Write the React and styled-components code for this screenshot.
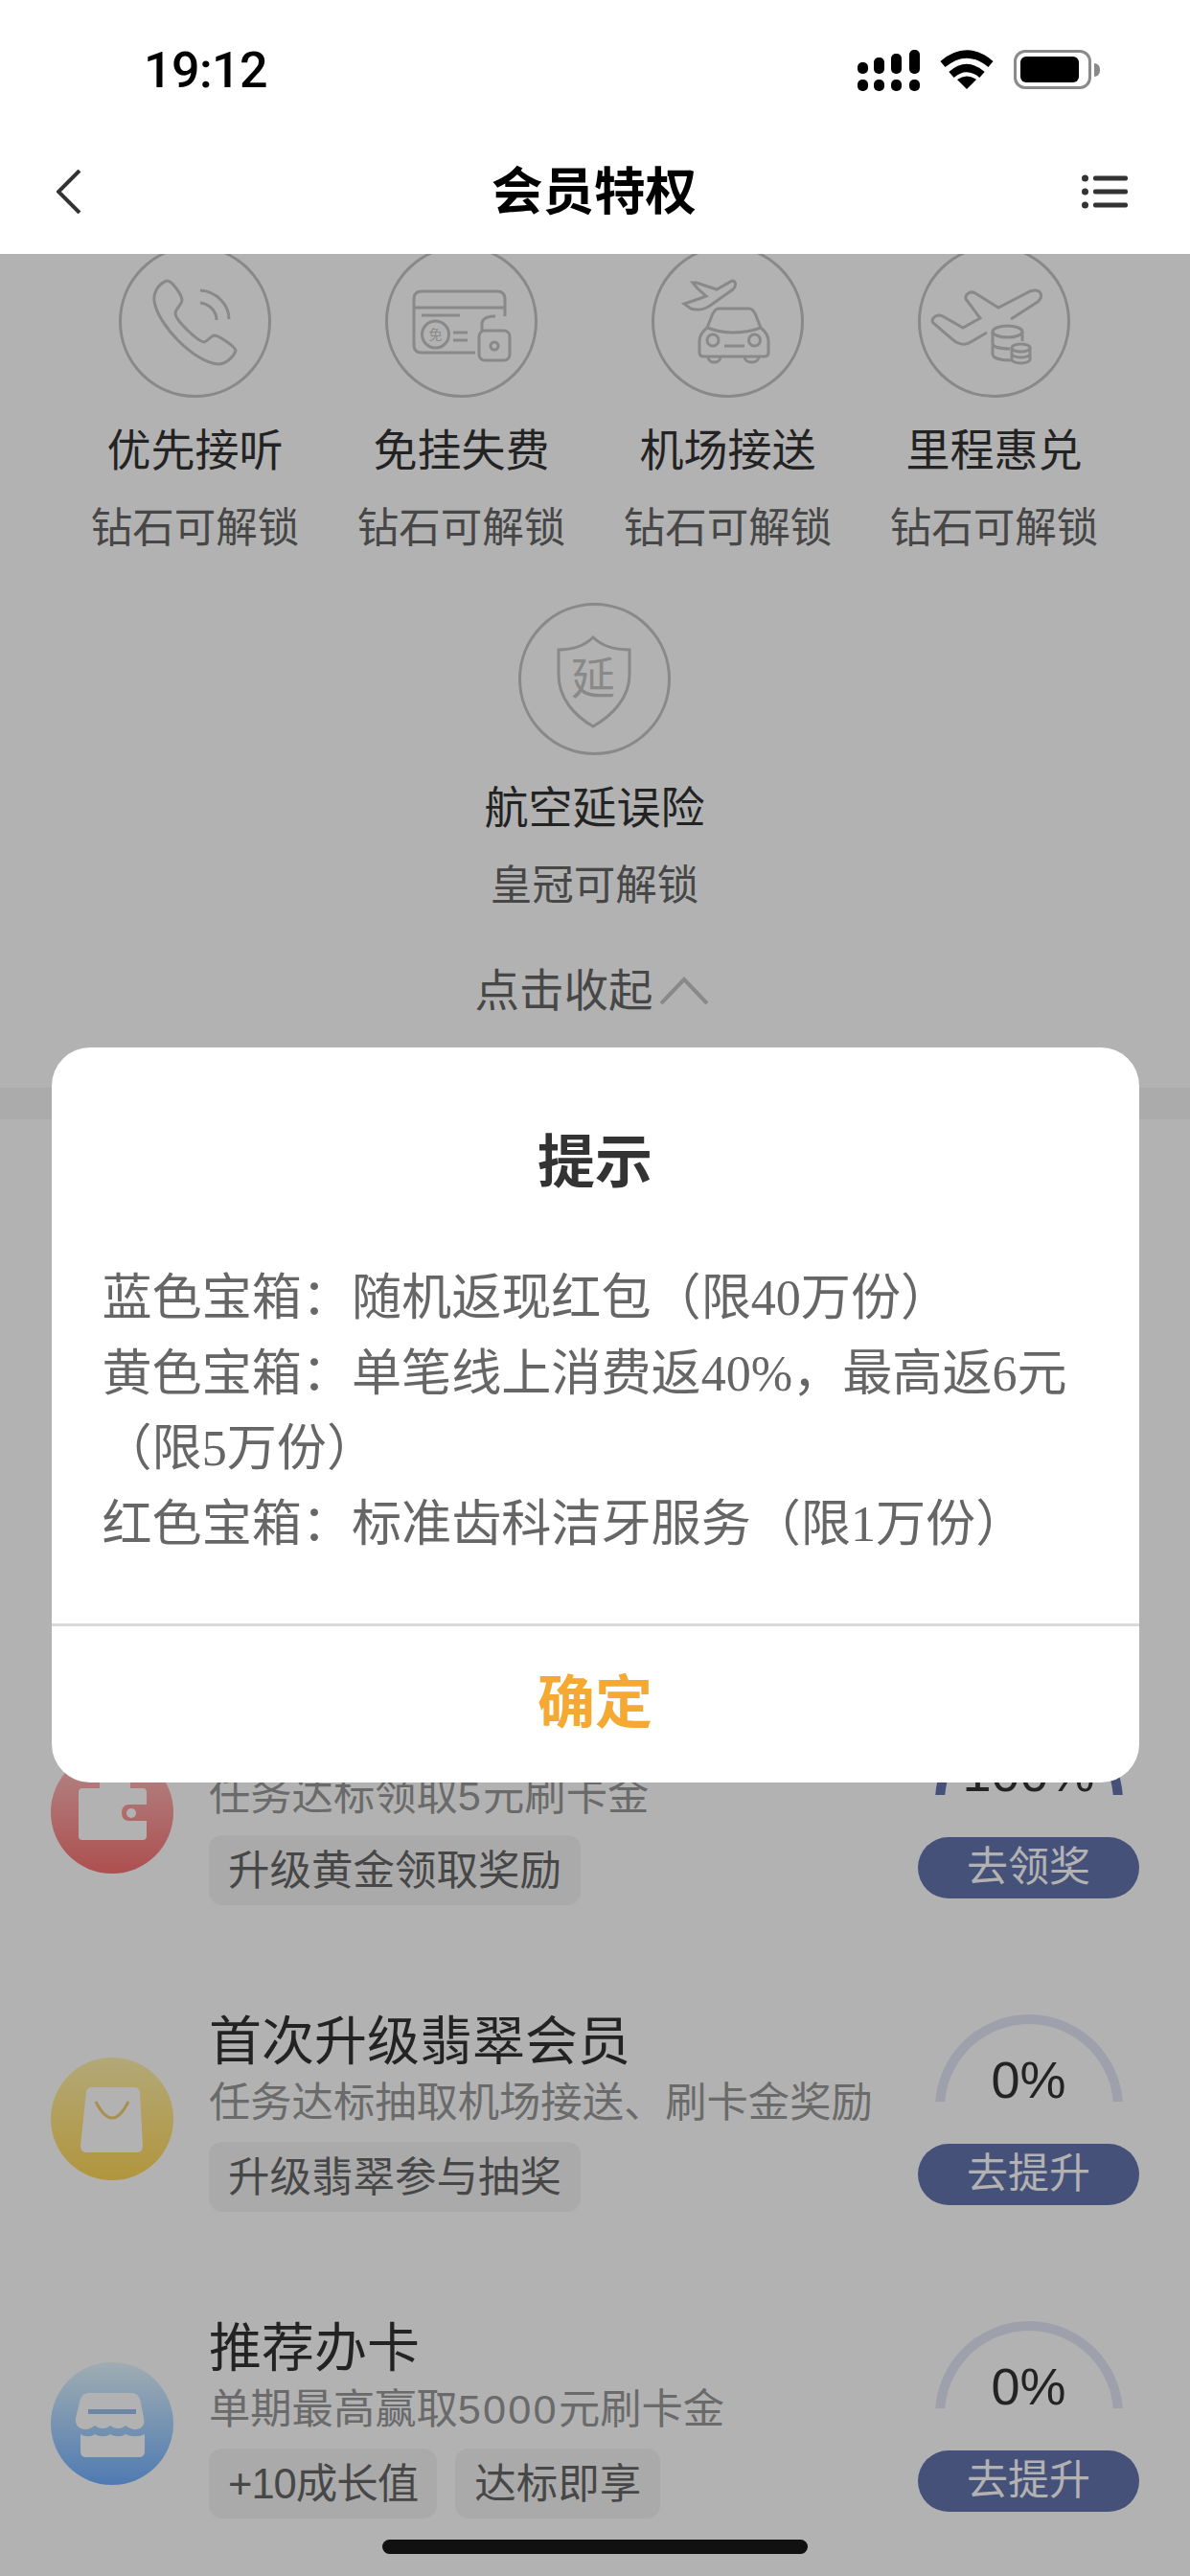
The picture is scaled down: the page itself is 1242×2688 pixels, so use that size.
import React from "react";
import styled, { createGlobalStyle } from "styled-components";

const GlobalStyle = createGlobalStyle`
  html, body { margin: 0; padding: 0; background: #fff; }
  * { box-sizing: border-box; }
  body { font-family: "Liberation Sans", "Noto Sans CJK SC", sans-serif; }
`;

const Screen = styled.div`
  position: relative;
  width: 1242px;
  height: 2688px;
  display: flex;
  flex-direction: column;
  overflow: hidden;
  background: #fff;
`;

const Top = styled.header`
  position: relative;
  z-index: 2;
  flex: none;
  background: #fff;
`;

const StatusBar = styled.div`
  height: 135px;
  display: flex;
  align-items: flex-start;
  justify-content: space-between;
  padding: 52px 103px 0 150px;
`;

const Clock = styled.div`
  font-family: Roboto, "Liberation Sans", sans-serif;
  font-size: 52px;
  line-height: 44px;
  font-weight: 500;
  letter-spacing: -0.6px;
  color: #000;
`;

const StatusIcons = styled.div`
  display: flex;
  gap: 21px;
`;

const Battery = styled.div`
  position: relative;
  width: 81px;
  height: 41px;
  padding: 4px;
  border: 3px solid #8a8a8a;
  border-radius: 12px;
  &::before {
    content: "";
    display: block;
    width: 61px;
    height: 27px;
    background: #000;
    border-radius: 6px;
  }
  &::after {
    content: "";
    position: absolute;
    right: -12px;
    top: 11px;
    width: 6px;
    height: 14px;
    background: #8a8a8a;
    border-radius: 0 6px 6px 0;
  }
`;

const Nav = styled.nav`
  height: 130px;
  display: grid;
  grid-template-columns: 1fr auto 1fr;
  align-items: center;
  padding: 0 61px 0 59px;
`;

const NavTitle = styled.h1`
  margin: 0;
  padding-top: 2px;
  font-size: 53.5px;
  line-height: 60px;
  font-weight: 700;
  color: #000;
`;

const NavEnd = styled.div`
  justify-self: ${(p) => (p.$end ? "end" : "start")};
  margin-right: ${(p) => (p.$end ? "4px" : "0")};
  display: flex;
`;

const Body = styled.main`
  position: relative;
  flex: 1;
  min-height: 0;
  overflow: hidden;
`;

const Scroll = styled.div`
  margin-top: -9px;
`;

const Perks = styled.section`
  padding: 0 65px 71px 64px;
  display: grid;
  grid-template-columns: repeat(4, 278px);
  justify-content: center;
  row-gap: 48px;
`;

const Perk = styled.div`
  display: flex;
  flex-direction: column;
  align-items: center;
  grid-column: ${(p) => (p.$wide ? "1 / -1" : "auto")};
`;

const PerkBadge = styled.svg`
  display: block;
  width: 159px;
  height: 159px;
  fill: none;
  stroke: #c4c4c4;
  stroke-width: 3;
`;

const PerkName = styled.div`
  margin-top: 25px;
  font-size: 46px;
  line-height: 60px;
  color: #333;
`;

const PerkHint = styled.div`
  margin-top: 21px;
  font-size: 43.5px;
  line-height: 60px;
  color: #666;
`;

const Collapse = styled.div`
  grid-column: 1 / -1;
  margin-top: 2px;
  display: flex;
  justify-content: center;
  align-items: center;
  gap: 7px;
  font-size: 46.5px;
  line-height: 60px;
  color: #666;
  svg { margin-right: 7px; }
`;

const Band = styled.div`
  height: 33px;
  background: #f5f5f5;
`;

const Tasks = styled.section`
  padding: 612px 53px 0;
  display: flex;
  flex-direction: column;
  gap: 112px;
`;

const Task = styled.article`
  height: 208px;
  display: flex;
  align-items: flex-start;
`;

const TaskIcon = styled.div`
  flex: none;
  width: 128px;
  height: 128px;
  margin: ${(p) => p.$top}px 37px 0 0;
  border-radius: 50%;
  background: linear-gradient(180deg, ${(p) => p.$from}, ${(p) => p.$to});
  svg { display: block; }
`;

const TaskText = styled.div`
  flex: 1;
  min-width: 0;
`;

const TaskTitle = styled.div`
  font-size: 55px;
  line-height: 60px;
  color: #333;
`;

const TaskDesc = styled.div`
  margin-top: 9px;
  font-size: 43.3px;
  line-height: 50px;
  white-space: nowrap;
  color: #999;
`;

const Digits = styled.span`
  letter-spacing: 2.2px;
`;

const Tags = styled.div`
  margin-top: 16px;
  display: flex;
  gap: 19px;
`;

const Tag = styled.span`
  height: 73px;
  padding: 0 20px 6px;
  display: flex;
  align-items: center;
  font-size: 43.5px;
  letter-spacing: ${(p) => (p.$tight ? "-1px" : "0")};
  color: #666;
  background: #f4f4f4;
  border-radius: 14px;
`;

const TaskSide = styled.div`
  flex: none;
  width: 231px;
  padding-top: 2px;
  display: flex;
  flex-direction: column;
  align-items: center;
`;

const Gauge = styled.div`
  display: grid;
  width: 196px;
  justify-items: center;
  > * { grid-area: 1 / 1; }
  svg { display: block; align-self: start; }
`;

const Percent = styled.div`
  margin-top: 38px;
  font-size: 54px;
  line-height: 60px;
  color: #333;
`;

const TaskBtn = styled.button`
  margin-top: 37px;
  width: 231px;
  height: 64px;
  padding: 0 0 2px;
  border: 0;
  border-radius: 32px;
  background: #6375ae;
  color: #fff;
  font: inherit;
  font-size: 43px;
  line-height: 62px;
`;

const Mask = styled.div`
  position: absolute;
  inset: 0;
  z-index: 1;
  display: flex;
  align-items: center;
  justify-content: center;
  background: rgba(0, 0, 0, 0.3);
`;

const Dialog = styled.div`
  width: 1135px;
  background: #fff;
  border-radius: 40px;
  overflow: hidden;
`;

const DialogTitle = styled.h2`
  margin: 0;
  padding-top: 86px;
  text-align: center;
  font-size: 60px;
  line-height: 70px;
  font-weight: 700;
  color: #333;
`;

const DialogText = styled.div`
  padding: 67px 53px 64px;
  font-family: "Liberation Serif", "Noto Sans CJK SC", serif;
  font-size: 52.1px;
  line-height: 78.5px;
  text-spacing-trim: space-all;
  color: #666;
`;

const DialogBtn = styled.div`
  height: 166px;
  padding-bottom: 14px;
  display: flex;
  align-items: center;
  justify-content: center;
  border-top: 3px solid #d9d9d9;
  font-size: 60px;
  font-weight: 700;
  color: #f5a933;
`;

const HomeBar = styled.div`
  position: absolute;
  z-index: 3;
  left: 399px;
  bottom: 23px;
  width: 444px;
  height: 15px;
  border-radius: 8px;
  background: #111;
`;

const SignalIcon = () => (
  <svg width="65" height="43" viewBox="0 0 65 43" fill="#000">
    <rect x="0" y="13" width="11" height="12" rx="5" />
    <rect x="17" y="8" width="11" height="17" rx="5" />
    <rect x="35" y="4" width="11" height="21" rx="5" />
    <rect x="54" y="0" width="11" height="25" rx="5" />
    <rect x="0" y="31" width="11" height="12" rx="5" />
    <rect x="17" y="31" width="11" height="12" rx="5" />
    <rect x="35" y="31" width="11" height="12" rx="5" />
    <rect x="54" y="31" width="11" height="12" rx="5" />
  </svg>
);

const WifiIcon = () => (
  <svg width="56" height="41" viewBox="0 0 56 41" fill="none" stroke="#000" strokeWidth="8">
    <path d="M3 15Q28 -6 53 15" />
    <path d="M12 26Q28 12 44 26" />
    <path d="M18 31Q28 24 38 31L28 41Z" fill="#000" stroke="none" />
  </svg>
);

const BackIcon = () => (
  <svg width="26" height="46" viewBox="0 0 26 46" fill="none" stroke="#333" strokeWidth="4">
    <path d="M24 1L2 23L24 45" />
  </svg>
);

const MenuIcon = () => (
  <svg width="48" height="36" viewBox="0 0 48 36" fill="#333">
    <circle cx="3.5" cy="4" r="3.5" />
    <circle cx="3.5" cy="18" r="3.5" />
    <circle cx="3.5" cy="32" r="3.5" />
    <rect x="12" y="1.5" width="36" height="5" rx="2" />
    <rect x="12" y="15.5" width="36" height="5" rx="2" />
    <rect x="12" y="29.5" width="36" height="5" rx="2" />
  </svg>
);

const PhoneGlyph = () => (
  <>
    <path d="M50 37C42 40 36 48 37 58C40 82 78 122 104 124C112 124 120 116 122 110C122 106 104 94 100 94C96 94 93 100 89 101C82 100 59 78 59 71C59 66 66 62 66 57C66 52 55 36 50 37Z" />
    <path d="M85 47C102 48 115 62 115 77" />
    <path d="M85 60C94 61 102 68 102 78" />
  </>
);

const CardGlyph = () => (
  <>
    <path d="M125 74V56Q125 48 117 48H38Q30 48 30 56V104Q30 112 38 112H94" />
    <path d="M30 65H125M38 73H78M71 91H86M71 99H86" />
    <circle cx="52.5" cy="93" r="14" />
    <text x="52.5" y="98" fontSize="14" textAnchor="middle" fill="#c4c4c4" stroke="none">免</text>
    <rect x="98" y="89" width="32" height="31" rx="6" />
    <circle cx="114" cy="105" r="4" />
    <path d="M101 89V82Q101 74 115 74" />
  </>
);

const TransferGlyph = () => (
  <>
    <path d="M84 37C88 37 89 42 85 46L61 63C55 67 47 68 41 66L34 61L49 56L57 53L48 45L43 39L47 39L68 46Z" />
    <path d="M70 66H102C106 66 108 70 110 76L114 86C119 90 122 94 122 100V112C122 115 120 116 117 116H55C52 116 50 115 50 112V100C50 94 53 90 58 86L62 76C64 70 66 66 70 66Z" />
    <path d="M58 86Q86 96 114 86M76 105H97" />
    <circle cx="64" cy="99" r="6" />
    <circle cx="107.5" cy="99" r="6" />
    <path d="M59 116C59 124 72 124 72 116M97 116C97 124 112 124 112 116" />
  </>
);

const MilesGlyph = () => (
  <>
    <path d="M97 77L125 59C131 54 129 47 122 47C119 47 116 48 113 50L84 65L60 50C55 47 49 51 50 56L65 76L47 86L26 74C20 71 13 76 16 81L36 98C41 103 49 105 55 101L72 91" />
    <ellipse cx="93.5" cy="90" rx="15.5" ry="6" />
    <path d="M78 90V113C78 117 84 120 97 120M78 102C78 106 86 108 96 108M109 90V100" />
    <ellipse cx="107.5" cy="107" rx="9.5" ry="4" />
    <path d="M98 107V119C98 121 102 123 107.5 123C113 123 117 121 117 119V107M98 113C98 115 102 117 107.5 117C113 117 117 115 117 113" />
  </>
);

const ShieldGlyph = () => (
  <>
    <path d="M78 36C68 46 56 49 42 49V75C42 100 59 118 78 129C97 118 116 100 116 75V49C100 49 88 46 78 36Z" />
    <text x="78" y="95" fontSize="46" textAnchor="middle" fill="#c4c4c4" stroke="none">延</text>
  </>
);

const WalletIcon = () => (
  <svg width="128" height="128" viewBox="0 0 128 128" fill="#fff">
    <path d="M51 39V33H83V39Z" />
    <path fillRule="evenodd" d="M33 39H96Q100 39 100 43V56H82Q74 56 74 64.500Q74 73 82 73H100V89Q100 93 96 93H33Q29 93 29 89V43Q29 39 33 39Z" />
    <circle cx="84" cy="65" r="5" />
  </svg>
);

const BagIcon = () => (
  <svg width="128" height="128" viewBox="0 0 128 128" fill="#fff">
    <path d="M43 31H87Q92 31 93 36L96 92Q96 99 90 99H37Q31 99 31 92L37 36Q38 31 43 31Z" />
    <path d="M47 46Q64 80 81 46" fill="none" stroke="#f0d070" strokeWidth="3" />
  </svg>
);

const ShopIcon = () => (
  <svg width="128" height="128" viewBox="0 0 128 128" fill="#fff">
    <path d="M40 32H84C90 32 93 36 94 42L97 58C99 66 94 70 88 70C84 70 81 68 78 66C74 70 67 70 62 66C58 70 51 70 46 66C43 68 40 70 36 70C29 70 25 65 26 58L30 42C31 36 34 32 40 32Z" />
    <rect x="39" y="49" width="50" height="5" fill="#9cc0ec" />
    <path d="M31 75C36 78 42 78 46 75C51 78 58 78 62 75C67 78 74 78 78 75C84 78 92 78 98 75V93Q98 99 92 99H37Q31 99 31 93Z" />
  </svg>
);

const ProgressArc = ({ done }) => (
  <svg width="196" height="91" viewBox="0 0 196 91" fill="none" strokeWidth="10">
    <path d="M5 98A93 93 0 0 1 191 98" stroke={done ? "#6375ae" : "#e3e7f6"} />
  </svg>
);

const perks = [
  { name: "优先接听", hint: "钻石可解锁", glyph: <PhoneGlyph /> },
  { name: "免挂失费", hint: "钻石可解锁", glyph: <CardGlyph /> },
  { name: "机场接送", hint: "钻石可解锁", glyph: <TransferGlyph /> },
  { name: "里程惠兑", hint: "钻石可解锁", glyph: <MilesGlyph /> },
  { name: "航空延误险", hint: "皇冠可解锁", glyph: <ShieldGlyph />, wide: true },
];

const tasks = [
  {
    title: "首次升级黄金会员",
    desc: <>任务达标领取<Digits>5</Digits>元刷卡金</>,
    tags: ["升级黄金领取奖励"],
    percent: "100%",
    done: true,
    action: "去领奖",
    icon: <WalletIcon />,
    from: "#ffc4c4",
    to: "#f87272",
    top: 47,
  },
  {
    title: "首次升级翡翠会员",
    desc: "任务达标抽取机场接送、刷卡金奖励",
    tags: ["升级翡翠参与抽奖"],
    percent: "0%",
    action: "去提升",
    icon: <BagIcon />,
    from: "#fff2ac",
    to: "#ffd658",
    top: 47,
  },
  {
    title: "推荐办卡",
    desc: <>单期最高赢取<Digits>5000</Digits>元刷卡金</>,
    tags: ["+10成长值", "达标即享"],
    percent: "0%",
    action: "去提升",
    icon: <ShopIcon />,
    from: "#e5f8ff",
    to: "#72b0ff",
    top: 45,
  },
];

export default function App() {
  return (
    <Screen>
      <GlobalStyle />
      <Top>
        <StatusBar>
          <Clock>19:12</Clock>
          <StatusIcons>
            <SignalIcon />
            <WifiIcon />
            <Battery />
          </StatusIcons>
        </StatusBar>
        <Nav>
          <NavEnd>
            <BackIcon />
          </NavEnd>
          <NavTitle>会员特权</NavTitle>
          <NavEnd $end>
            <MenuIcon />
          </NavEnd>
        </Nav>
      </Top>

      <Body>
        <Scroll>
          <Perks>
            {perks.map((perk) => (
              <Perk key={perk.name} $wide={perk.wide}>
                <PerkBadge viewBox="0 0 159 159">
                  <circle cx="79.500" cy="79.500" r="78" />
                  {perk.glyph}
                </PerkBadge>
                <PerkName>{perk.name}</PerkName>
                <PerkHint>{perk.hint}</PerkHint>
              </Perk>
            ))}
            <Collapse>
              点击收起
              <svg width="50" height="30" viewBox="0 0 50 30" fill="none" stroke="#c4c4c4" strokeWidth="4">
                <path d="M1 28L25 3L49 28" />
              </svg>
            </Collapse>
          </Perks>
          <Band />
          <Tasks>
            {tasks.map((task) => (
              <Task key={task.title}>
                <TaskIcon $from={task.from} $to={task.to} $top={task.top}>
                  {task.icon}
                </TaskIcon>
                <TaskText>
                  <TaskTitle>{task.title}</TaskTitle>
                  <TaskDesc>{task.desc}</TaskDesc>
                  <Tags>
                    {task.tags.map((tag) => (
                      <Tag key={tag} $tight={tag.startsWith("+")}>{tag}</Tag>
                    ))}
                  </Tags>
                </TaskText>
                <TaskSide>
                  <Gauge>
                    <ProgressArc done={task.done} />
                    <Percent>{task.percent}</Percent>
                  </Gauge>
                  <TaskBtn>{task.action}</TaskBtn>
                </TaskSide>
              </Task>
            ))}
          </Tasks>
        </Scroll>

        <Mask>
          <Dialog>
            <DialogTitle>提示</DialogTitle>
            <DialogText>
              <div>蓝色宝箱：随机返现红包（限40万份）</div>
              <div>黄色宝箱：单笔线上消费返40%，最高返6元（限5万份）</div>
              <div>红色宝箱：标准齿科洁牙服务（限1万份）</div>
            </DialogText>
            <DialogBtn>确定</DialogBtn>
          </Dialog>
        </Mask>
      </Body>
      <HomeBar />
    </Screen>
  );
}
